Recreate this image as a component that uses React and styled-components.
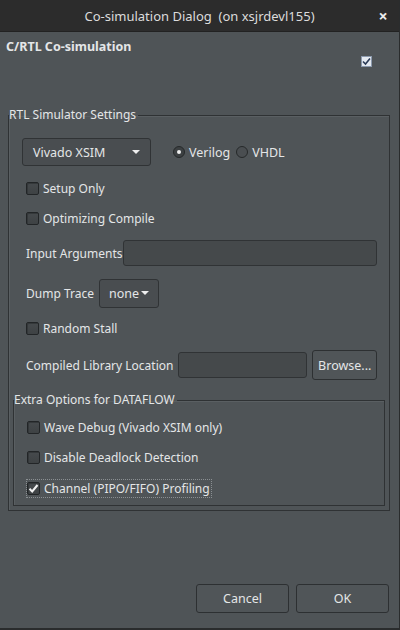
import styled, { createGlobalStyle } from "styled-components";

const GlobalStyle = createGlobalStyle`
  html, body {
    margin: 0;
    padding: 0;
    background: #4f5457;
  }
  * {
    box-sizing: border-box;
  }
`;

const Window = styled.div`
  width: 400px;
  height: 630px;
  display: flex;
  flex-direction: column;
  background: #4f5457;
  border-right: 1px solid #2a2c2d;
  border-bottom: 2px solid #2a2c2d;
  font-family: "Noto Sans", "Open Sans", sans-serif;
  font-size: 12px;
  color: #e4e6e7;
`;

const TitleBar = styled.div`
  height: 32px;
  flex: none;
  display: grid;
  grid-template-columns: 34px 1fr 34px;
  align-items: center;
  background: #2c2c2c;
  border-bottom: 1px solid #222;
  color: #dcdcdc;
  font-size: 13px;
`;

const Title = styled.div`
  grid-column: 2;
  text-align: center;
  white-space: pre;
`;

const Close = styled.div`
  grid-column: 3;
  display: flex;
  justify-content: center;
  color: #ececec;
  font-size: 16px;
  font-weight: bold;
  padding-left: 2px;
`;

const Body = styled.div`
  flex: 1;
  display: flex;
  flex-direction: column;
  padding: 7px 9px 0 8px;
`;

const Header = styled.div`
  height: 69px;
  display: flex;
  flex-direction: column;
  margin-left: -2px;
`;

const Heading = styled.div`
  font-weight: bold;
  font-size: 12.5px;
  height: 16px;
  line-height: 16px;
`;

const SmallCheck = styled.div`
  align-self: flex-end;
  margin: 1px 18px 0 0;
  width: 11px;
  height: 11px;
  background: #e4e9f0;
  border: 1px solid #8b99ad;
  display: flex;
  align-items: center;
  justify-content: center;
`;

const Group = styled.fieldset`
  margin: ${(p) => p.$m || 0};
  padding: 0 ${(p) => p.$px}px ${(p) => p.$pb}px;
  border: 1px solid #2f3234;
  box-shadow: inset 1px 1px 0 #5a5f62;
  min-width: 0;
`;

const Legend = styled.legend`
  padding: 0 2px 0 0;
  margin-left: ${(p) => p.$ml || 0}px;
  font-size: 12px;
  height: 14px;
  line-height: 14px;
  color: #e4e6e7;
`;

const Content = styled.div`
  display: flex;
  flex-direction: column;
  padding: 0 ${(p) => p.$pr}px 0 ${(p) => p.$pl}px;
`;

const Row = styled.div`
  height: ${(p) => p.$h}px;
  padding-top: ${(p) => p.$pt || 0}px;
  padding-left: ${(p) => p.$indent || 0}px;
  display: flex;
  align-items: center;
  gap: ${(p) => p.$gap || 0}px;
`;

const Select = styled.div`
  width: ${(p) => p.$w}px;
  height: ${(p) => p.$hh}px;
  display: flex;
  align-items: center;
  justify-content: space-between;
  padding: 0 ${(p) => p.$pad}px;
  background: #494d50;
  border: 1px solid #303335;
  border-radius: 3px;
  font-size: 12.5px;
`;

const Arrow = styled.span`
  width: 0;
  height: 0;
  border-left: 4px solid transparent;
  border-right: 4px solid transparent;
  border-top: 4px solid #eeeeee;
`;

const Radios = styled.div`
  display: flex;
  align-items: center;
  gap: 6px;
`;

const Radio = styled.label`
  display: flex;
  align-items: center;
  gap: 4px;
  font-size: 12.5px;
`;

const RadioDot = styled.span`
  width: 12px;
  height: 12px;
  border-radius: 50%;
  border: 1px solid #26292a;
  background: ${(p) => (p.$on ? "#3c4042" : "#4a4e51")};
  display: flex;
  align-items: center;
  justify-content: center;
  &::after {
    content: "";
    width: 4px;
    height: 4px;
    border-radius: 50%;
    background: ${(p) => (p.$on ? "#eeeeee" : "transparent")};
  }
`;

const Check = styled.label`
  display: flex;
  align-items: center;
  gap: 4px;
  padding: 0 1px 0 0;
  border: 1px dotted ${(p) => (p.$focus ? "#8a8f92" : "transparent")};
`;

const Box = styled.span`
  width: 13px;
  height: 13px;
  border: 1px solid #222527;
  border-radius: 2px;
  background: linear-gradient(#464a4d, #3e4244);
  box-shadow: inset 1px 1px 0 #34383a;
  display: flex;
  align-items: center;
  justify-content: center;
`;

const Label = styled.span`
  font-size: 12px;
  white-space: nowrap;
`;

const Input = styled.div`
  width: ${(p) => p.$w}px;
  height: ${(p) => p.$hh}px;
  margin-left: ${(p) => (p.$push ? "auto" : "0")};
  background: #45494b;
  border: 1px solid #303335;
  border-radius: 3px;
`;

const Button = styled.button`
  width: ${(p) => p.$w}px;
  height: ${(p) => p.$hh}px;
  background: #505558;
  border: 1px solid #2d3032;
  border-radius: 3px;
  color: #e4e6e7;
  font-family: inherit;
  font-size: 12.5px;
  padding: 0;
`;

const Footer = styled.div`
  margin-top: auto;
  display: flex;
  justify-content: flex-end;
  gap: 7px;
  padding: 0 1px 15px 0;
`;

const Tick = () => (
  <svg width="11" height="11" viewBox="0 0 11 11">
    <path d="M1.5 5.8 L4.2 8.5 L9.5 2" fill="none" stroke="#f2f2f2" strokeWidth="2" />
  </svg>
);

function CheckItem({ label, checked, focus }) {
  return (
    <Check $focus={focus}>
      <Box>{checked && <Tick />}</Box>
      <Label>{label}</Label>
    </Check>
  );
}

export default function App() {
  return (
    <Window>
      <GlobalStyle />
      <TitleBar>
        <Title>Co-simulation Dialog  (on xsjrdevl155)</Title>
        <Close>×</Close>
      </TitleBar>
      <Body>
        <Header>
          <Heading>C/RTL Co-simulation</Heading>
          <SmallCheck>
            <svg width="9" height="9" viewBox="0 0 9 9">
              <path d="M1 4.5 L3.5 7 L8 1.5" fill="none" stroke="#2a3a55" strokeWidth="1.6" />
            </svg>
          </SmallCheck>
        </Header>
        <Group $px={4} $pb={4}>
          <Legend $ml={-4}>RTL Simulator Settings</Legend>
          <Content $pl={9} $pr={8}>
            <Row $h={48} $pt={12} $gap={22}>
              <Select $w={129} $hh={28} $pad={10}>
                Vivado XSIM <Arrow />
              </Select>
              <Radios>
                <Radio>
                  <RadioDot $on />
                  Verilog
                </Radio>
                <Radio>
                  <RadioDot />
                  VHDL
                </Radio>
              </Radios>
            </Row>
            <Row $h={36} $indent={3}>
              <CheckItem label="Setup Only" />
            </Row>
            <Row $h={24} $indent={3}>
              <CheckItem label="Optimizing Compile" />
            </Row>
            <Row $h={46} $indent={4}>
              <Label>Input Arguments</Label>
              <Input $w={256} $hh={26} $push />
            </Row>
            <Row $h={34} $indent={4} $gap={5}>
              <Label>Dump Trace</Label>
              <Select $w={60} $hh={29} $pad={9}>
                none <Arrow />
              </Select>
            </Row>
            <Row $h={36} $indent={3}>
              <CheckItem label="Random Stall" />
            </Row>
            <Row $h={38} $indent={4} $gap={5}>
              <Label>Compiled Library Location</Label>
              <Input $w={136} $hh={26} $push />
              <Button $w={68} $hh={30}>Browse...</Button>
            </Row>
          </Content>
          <Group $px={0} $pb={0} $m="9px 0 0">
            <Legend>Extra Options for DATAFLOW</Legend>
            <Content $pl={12} $pr={0}>
              <Row $h={36} $pt={4}>
                <CheckItem label="Wave Debug (Vivado XSIM only)" />
              </Row>
              <Row $h={28}>
                <CheckItem label="Disable Deadlock Detection" />
              </Row>
              <Row $h={34}>
                <CheckItem label="Channel (PIPO/FIFO) Profiling" checked focus />
              </Row>
            </Content>
          </Group>
        </Group>
        <Footer>
          <Button $w={93} $hh={29}>Cancel</Button>
          <Button $w={93} $hh={29}>OK</Button>
        </Footer>
      </Body>
    </Window>
  );
}
